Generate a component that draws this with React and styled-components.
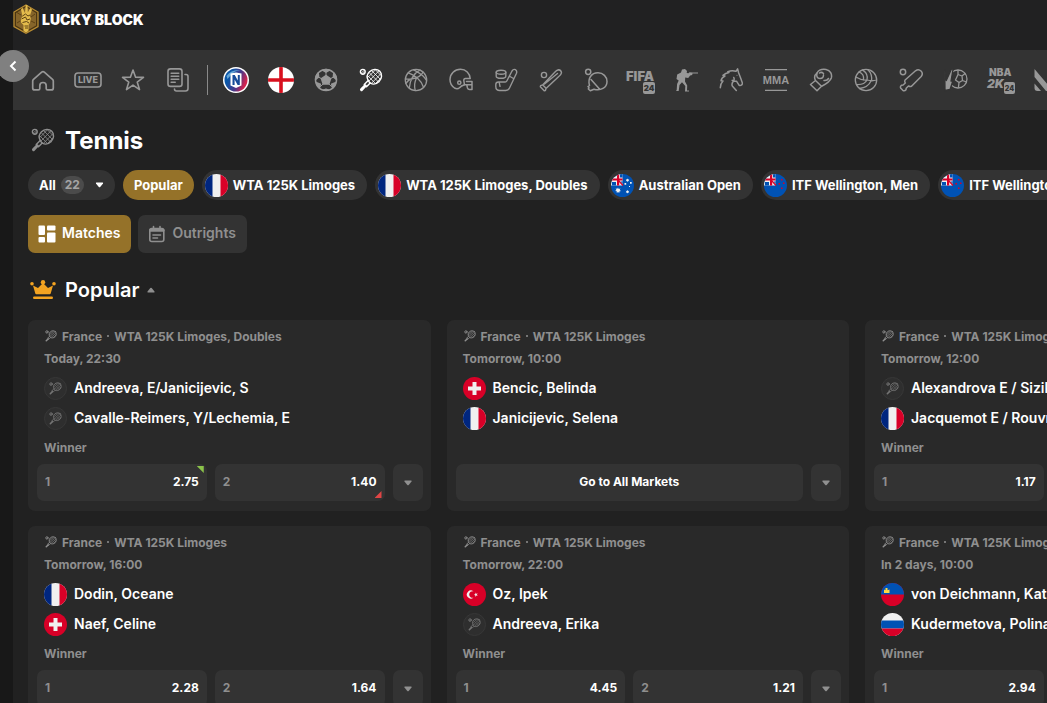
import React from 'react';
import styled, { createGlobalStyle } from 'styled-components';

const GlobalStyle = createGlobalStyle`
  * {
    box-sizing: border-box;
  }
  html {
    scrollbar-width: none;
  }
  body {
    margin: 0;
    background: #212121;
    color: #fff;
    font-family: Inter, "Open Sans", sans-serif;
    overflow-x: hidden;
  }
  button {
    font-family: inherit;
    border: none;
    margin: 0;
    cursor: pointer;
  }
`;

const Layout = styled.div`
  position: relative;
  display: flex;
  min-height: 100vh;
`;

const Rail = styled.aside`
  flex: 0 0 13px;
  background: #181818;
`;

const Page = styled.div`
  flex: 1;
  min-width: 0;
  overflow: hidden;
`;

const Header = styled.header`
  display: flex;
  align-items: flex-start;
  height: 50px;
  padding-top: 4px;
  background: #212122;
`;

const Brand = styled.a`
  display: flex;
  align-items: center;
  gap: 3px;
  color: #fff;
  text-decoration: none;
  font-size: 14px;
  font-weight: 900;
`;

const BackButton = styled.button`
  position: absolute;
  top: 50px;
  left: -3px;
  display: flex;
  align-items: center;
  justify-content: center;
  width: 32px;
  height: 32px;
  padding: 0;
  border-radius: 50%;
  background: #808080;
`;

const SportsNav = styled.nav`
  display: flex;
  align-items: center;
  height: 60px;
  padding-left: 7px;
  background: #333;
  overflow: hidden;
`;

const SportLink = styled.a`
  display: flex;
  flex: 0 0 45px;
  align-items: center;
  justify-content: center;
  color: ${(props) => (props.$active ? '#fff' : '#989898')};
`;

const Divider = styled.span`
  flex: 0 0 1px;
  height: 30px;
  margin: 0 5px 0 7px;
  background: #8a8a8a;
`;

const Content = styled.main`
  padding-left: 15px;
`;

const Heading = styled.div`
  display: flex;
  align-items: center;
  gap: 8px;
  height: 60px;
  color: #8f8f8f;
`;

const HeadingIcon = styled.span`
  display: flex;
  justify-content: center;
  width: 29px;
`;

const Title = styled.h1`
  margin: 0;
  font-size: 24px;
  font-weight: 700;
  color: #fff;
`;

const SubTitle = styled.h2`
  margin: 0;
  font-size: 20px;
  font-weight: 600;
  color: #fff;
`;

const Chips = styled.div`
  display: flex;
  gap: 8px;
  overflow: hidden;
`;

const Chip = styled.button`
  display: flex;
  flex: none;
  align-items: center;
  gap: 5px;
  height: 30px;
  padding: ${(props) => (props.$flag ? '0 12px 0 3px' : '0 11px')};
  border-radius: 15px;
  background: ${(props) => (props.$active ? '#957229' : '#333')};
  color: #fff;
  font-size: 13px;
  font-weight: 700;
  white-space: nowrap;
`;

const Count = styled.span`
  margin-right: 6px;
  padding: 0 4px;
  border-radius: 9px;
  background: #4b4b4b;
  color: #a5a5a5;
  font-size: 12px;
  line-height: 18px;
`;

const Tabs = styled.div`
  display: flex;
  gap: 7px;
  margin: 15px 0 7px;
`;

const Tab = styled.button`
  display: flex;
  align-items: center;
  gap: 6px;
  height: 38px;
  padding: 0 11px 0 10px;
  border-radius: 7px;
  background: ${(props) => (props.$active ? '#957229' : '#333')};
  color: ${(props) => (props.$active ? '#fff' : '#8f8f8f')};
  font-size: 14px;
  font-weight: 600;
`;

const TabLabel = styled.span`
  padding-bottom: 4px;
`;

const Cards = styled.div`
  display: grid;
  grid-template-columns: repeat(3, 39.5%);
  gap: 15px 16px;
  padding-bottom: 15px;
`;

const Card = styled.article`
  display: flex;
  flex-direction: column;
  padding: 5px 8px 10px 9px;
  border-radius: 7px;
  background: #292929;
`;

const Meta = styled.div`
  display: flex;
  align-items: center;
  gap: 5px;
  height: 22px;
  padding-left: 7px;
  color: #8f8f8f;
  font-size: 12px;
  font-weight: 700;
  white-space: nowrap;
`;

const MetaIcon = styled.span`
  display: flex;
  padding-left: 1px;
`;

const Dot = styled.span`
  width: 2px;
  height: 2px;
  border-radius: 50%;
  background: #8f8f8f;
`;

const Teams = styled.div`
  margin-top: 4px;
  padding-left: 7px;
`;

const Team = styled.div`
  display: flex;
  align-items: center;
  gap: 7px;
  height: 30px;
  font-size: 14px;
  font-weight: 600;
  white-space: nowrap;
`;

const TeamName = styled.span`
  padding-bottom: 2px;
`;

const NoFlag = styled.span`
  display: flex;
  align-items: center;
  justify-content: center;
  width: 23px;
  height: 23px;
  border: 1px solid #373737;
  border-radius: 50%;
  background: #2e2e2e;
  color: #747474;
`;

const Market = styled.div`
  height: 31px;
  padding-left: 7px;
  color: #8f8f8f;
  font-size: 12px;
  font-weight: 700;
  line-height: 30px;
`;

const Odds = styled.div`
  display: flex;
  gap: 8px;
`;

const Odd = styled.button`
  position: relative;
  display: flex;
  flex: 1;
  align-items: center;
  justify-content: ${(props) => (props.$center ? 'center' : 'space-between')};
  height: 37px;
  padding: 0 8px 2px;
  border-radius: 7px;
  background: #333;
  color: #fff;
  font-size: 12px;
  font-weight: 700;
`;

const OddLabel = styled.span`
  color: #8f8f8f;
`;

const Trend = styled.span`
  position: absolute;
  right: 3px;
  ${(props) => (props.$up ? 'top: 2px;' : 'bottom: 3px;')}
  width: 7px;
  height: 7px;
  background: ${(props) => (props.$up ? '#8bc34a' : '#e04545')};
  clip-path: ${(props) =>
    props.$up ? 'polygon(0 0, 100% 0, 100% 100%)' : 'polygon(100% 0, 100% 100%, 0 100%)'};
`;

const MoreButton = styled.button`
  display: flex;
  flex: 0 0 30px;
  align-items: center;
  justify-content: center;
  height: 37px;
  padding: 0;
  border-radius: 7px;
  background: #333;
  color: #909090;
`;

const FlagSvg = styled.svg`
  flex: none;
  border-radius: 50%;
`;

const Caret = ({ up, size = 8 }) => (
  <svg width={size} height="6" viewBox="0 0 8 6" fill="currentColor">
    <path d={up ? 'M1 5.5h6q1 0 .5-1L4.7 1q-.7-.7-1.4 0L.5 4.5q-.5 1 .5 1z' : 'M1 .5h6q1 0 .5 1L4.7 5q-.7.7-1.4 0L.5 1.5q-.5-1 .5-1z'} />
  </svg>
);

const Stroke = ({ size = 24, width = 1.5, children }) => (
  <svg
    width={size}
    height={size}
    viewBox="0 0 24 24"
    fill="none"
    stroke="currentColor"
    strokeWidth={width}
    strokeLinecap="round"
    strokeLinejoin="round"
  >
    {children}
  </svg>
);

const Tennis = ({ size, width = 1.4 }) => (
  <Stroke size={size} width={width}>
    <circle cx="3.8" cy="3.8" r="2.4" />
    <path d="M2.4 4.8 5 2.6M3.4 5.6 5.6 4" strokeWidth=".7" />
    <path d="M20.8 3.2c2.6 2.7 2.3 7.3-.7 10.3-2.6 2.6-6.3 3.1-8.9 1.5L7.5 18.8l-2.3-2.2 4-4.2C7.6 9.6 8 6.2 10.5 3.8c3-3 7.6-3.2 10.3-.6z" />
    <path d="M9.2 12.3q.6 1.7 2.1 2.8" />
    <path d="m13 3 8.6 8.6M10.6 5 19.5 14M9.3 8.3l6.6 6.7M16.8 2.2l5.2 5.3M19.8 3 10.2 12.8M21.8 5.8 13 14.8M16 2.3 9 9.3M22.3 9.7 17 15" strokeWidth=".8" />
    <path d="m6.200 17.800-3.700 3.800" strokeWidth="3" />
  </Stroke>
);

const Home = () => (
  <Stroke width={1.7}>
    <path d="M2.500 11.300 10.700 4.200q1.300-1.100 2.600 0l8.200 7.100q.8.700.8 1.800v6.800q0 2-2 2h-3.600q-1.500 0-1.500-1.500v-2.700a3.200 3.200 0 0 0-6.400 0v2.700q0 1.500-1.500 1.500H3.700q-2 0-2-2v-6.800q0-1.100.8-1.800z" />
  </Stroke>
);

const Live = () => (
  <svg width="28" height="24" viewBox="0 0 28 24" fill="none" stroke="currentColor">
    <rect x="1" y="5" width="26" height="14" rx="3" strokeWidth="1.600" />
    <text x="14" y="15" textAnchor="middle" fontSize="9" fontWeight="800" fill="currentColor" stroke="none">LIVE</text>
  </svg>
);

const Star = () => (
  <Stroke width={1.6}>
    <path d="m12 2 2.600 7.200 7.900.2-6.300 4.700 2.300 7.500-6.500-4.500-6.500 4.500 2.300-7.500L1.500 9.400l7.900-.2z" />
  </Stroke>
);

const Slip = () => (
  <Stroke width={1.6}>
    <rect x="2" y=".9" width="14" height="17.500" rx="2.500" />
    <path d="M5.200 5.200h7.500M5.200 8.200h7.500M5.200 11.200h7.500M5.200 14.200h4M19 6.500h1q2 0 2 2v12q0 2.500-2.500 2.500h-9q-2 0-2-2" />
  </Stroke>
);

const NLogo = () => (
  <svg width="26" height="26" viewBox="0 0 26 26">
    <defs>
      <linearGradient id="nlogo" x1="0" y1="0" x2="1" y2=".4">
        <stop offset=".3" stopColor="#0b57a8" />
        <stop offset=".7" stopColor="#4c3787" />
        <stop offset="1" stopColor="#d3224e" />
      </linearGradient>
    </defs>
    <circle cx="13" cy="13" r="13" fill="#fff" />
    <circle cx="13" cy="13" r="11.500" fill="url(#nlogo)" />
    <path d="M3.500 9Q8 2.500 17 3q-6 1-9 5l-3.500 4z" fill="#65a6d6" />
    <path d="M7.500 6.500 13 5.500l5.500 1v12L13 21l-5.500-2.500z" fill="#fff" />
    <path d="M9.500 18V8h2.300l3 5.500V8h2v10h-2.200l-3-5.500V18z" fill="#174b99" />
  </svg>
);

const England = () => (
  <FlagSvg width="26" height="26" viewBox="0 0 26 26">
    <path fill="#fff" d="M0 0h26v26H0z" />
    <path fill="#d8101e" d="M11.200 0h3.600v11.200H26v3.600H14.800V26h-3.600V14.800H0v-3.600h11.200z" />
  </FlagSvg>
);

const Soccer = () => (
  <Stroke width={1.5}>
    <circle cx="12" cy="12" r="10.500" />
    <path d="m12 7.500 4.500 3.200-1.700 5.200H9.200l-1.700-5.200z" fill="currentColor" />
    <path d="M8.500 2.200 12 4.200l3.500-2L12 1.500zM1.600 11.500l3-2.600-.4-4L2 8.500zM22.400 11.500l-3-2.600.4-4L22 8.500zM5.300 20l1-3.800-3.800-1.400 1 3zM18.700 20l-1-3.800 3.800-1.400-1 3zM9.500 22.300l2.500-1 2.500 1z" fill="currentColor" />
    <path d="M12 4.500v3M4.500 9l3 1.700M19.500 9l-3 1.700M6.500 18.500l2.700-2.600M17.500 18.500l-2.700-2.600" strokeWidth="1" />
  </Stroke>
);

const Basketball = () => (
  <Stroke width={1.3}>
    <circle cx="12" cy="12" r="10.700" />
    <path d="M4.200 4.800C10 6.500 17 11.500 19.600 19.500M1.500 11C9 12 17 9 19 4M9.500 1.700C14 4 20 7 22.500 12.500M16 2Q6.500 7 5.300 20M12.500 10q-3 6-1.300 12.500M2 15.500q3-5.500 10.500-5.500" />
  </Stroke>
);

const Helmet = () => (
  <Stroke width={1.5}>
    <path d="M5.500 20C2.500 18 1 15 1 11.600 1 5.600 5.700 1.300 11.500 1.300c5.500 0 9.300 4 9.700 9.200h-4.700q-1.800.2-1.700 2l.7 4.200q-3.300 1-5 3-2 1.800-5 .3z" />
    <circle cx="10.300" cy="14.700" r="1.600" />
    <path d="M15.500 16.700h7.200M17.500 13.500h5.500v8h-2.500q-1.500 0-2-1.500l-.8-3.300" />
  </Stroke>
);

const Hockey = () => (
  <Stroke width={1.4}>
    <ellipse cx="7" cy="4.200" rx="4.800" ry="2" />
    <path d="M2.200 4.200v4c0 2.800 9.600 2.800 9.600 0v-4M18 3l-5.200 10q-.5 1-1.600 1H4.500q-2.700 0-2.700 2.500v2q0 4 4 4h6q2.500 0 3.700-2.500L22.500 5.200q.8-2.500-1.100-3.500T18 3zM5.200 14.300l.8 4M16 8.500l3.500 2" />
  </Stroke>
);

const Baseball = () => (
  <Stroke width={1.4}>
    <circle cx="5" cy="7" r="2.600" />
    <path d="M19.500 1.800q2.700.2 3 3-.5 2.200-3 4L7 20.500l-.6 2-1.200.2-3.900-3.900.3-1.200 2-.7L15.500 4.500q2-2.200 4-2.700zM4 17.300l2.800 2.800M5.500 16 18.500 5.500" />
  </Stroke>
);

const TableTennis = () => (
  <Stroke width={1.5}>
    <circle cx="4.200" cy="3.800" r="2.600" />
    <path d="M5.500 17.500c-2-7 1.800-12.700 8.500-12.700 5.200 0 9 4 9 8.700 0 6.300-6.500 9.700-13 7.700l-3.700 1.600-2-1.800.7-1.200-1-1.200zM7 11.500l8.500 9.500" />
  </Stroke>
);

const Fifa = () => (
  <svg width="32" height="28" viewBox="0 0 32 28" fill="currentColor" fontFamily="Inter" fontWeight="900">
    <text x="1" y="15" fontSize="13">FIFA</text>
    <rect x="18" y="16" width="12" height="12" rx="2" />
    <text x="24" y="25" fontSize="8" fill="#333" textAnchor="middle">24</text>
  </svg>
);

const Shooter = () => (
  <svg width="26" height="24" viewBox="0 0 26 24" fill="currentColor">
    <path d="M9 1.500 12 1l2 2-.3 2 1.800.3 1-1 3 .3h5.500v1h-5.500l-.3 1.500-2 .3-2 2.500-3-.5-.2 4 2.200 4-.2 5h2v1h-4l.3-5.500-3.300-3.600L6.500 17l-.8 6H3l.7-1 .4-6 1.600-3.500L3.500 11l.7-4.500L8 4.500z" />
  </svg>
);

const Horse = () => (
  <Stroke width={1.5}>
    <path d="M1.300 19.700Q1.500 15.500 4 13l-2-.2Q2.500 9.500 6 8l-2-.6Q6.500 5 10 4.500L8.800 3.600Q13 2 17 3.300L18.600.9l1 3.800 2.200 5.800 1.700 4.700q-.6 2.800-3.500 2l-2.500-4q-2.500.3-4.300-.8M14.800 9.500q1 2-.8 4.300-1.600 2.200-.7 4.200l4 4.500" />
    <circle cx="18" cy="7.200" r=".5" fill="currentColor" stroke="none" />
  </Stroke>
);

const Mma = () => (
  <svg width="28" height="24" viewBox="0 0 28 24" fill="currentColor">
    <path d="M3 1h22v1.300H3zM3 21.700h22V23H3z" />
    <text x="14" y="16" fontSize="11" fontWeight="700" textAnchor="middle" fontFamily="'Liberation Sans Narrow', 'Liberation Sans', sans-serif">MMA</text>
  </svg>
);

const Boxing = () => (
  <Stroke width={1.5}>
    <path d="m6.500 12.500-5 4L8 22.700l4.500-4.400zM6.500 12.500C5 9.500 6 6.500 8 5c2-3.500 5.500-4 9-3.500 4.500.8 6.300 5 5.300 8.500-1.300 4-5.300 6-9.800 8.300" />
    <path d="M8 5c-.8 3 0 5.500 3 5.500q3.500 0 3.500-3.500M10.500 5q2-1.500 4 .5M15 12.500q3 .5 4.500-2" />
  </Stroke>
);

const Volleyball = () => (
  <Stroke width={1.3}>
    <circle cx="12" cy="12" r="10.700" />
    <path d="M8.500 1.900Q14.500 6 13 12 7.500 12.500 1.800 9M13 12q5 1.500 9.500 0M5 4Q10.500 6 9.500 12M14 1.700q4.500 4.500 3.500 11M13 12Q10.500 17 2.500 16.500M17 13q-3 6.500-11.500 7.500" />
  </Stroke>
);

const Cricket = () => (
  <Stroke width={1.5}>
    <circle cx="4" cy="4" r="2.700" />
    <path d="M16.500 2.800q3-2.300 5.500.2t.2 5.500l-9.700 9.700q-1.500.7-3-.2l-2.300 2.200-.2 1.500q-1.500 1.800-3.200.6l-2-2q-1-1.700.6-3.100l1.700-.2L6.300 15q-1-1.500-.2-3z" />
  </Stroke>
);

const Futsal = () => (
  <Stroke width={1.3}>
    <circle cx="14" cy="11" r="9" />
    <path d="m14 6.500 4 1.500.5 4.500-3.500 2-3.500-2.500zM14 6.500V2.500M18 8l3-2.500M18.500 12.500l4 1.500M15 14.500l-.5 4.500" />
    <path d="M.8 2.500 2.300 12.500 7.500 1l1.500.5-2 11.500 2-.5-3 9L1 22.500z" fill="currentColor" stroke="#333" />
  </Stroke>
);

const Nba = () => (
  <svg width="30" height="28" viewBox="0 0 30 28" fill="currentColor" fontFamily="Inter" fontWeight="900">
    <text x="3" y="10" fontSize="10">NBA</text>
    <text x="1" y="22" fontSize="12" fontStyle="italic">2K</text>
    <rect x="18" y="16" width="11" height="12" rx="2" />
    <text x="23.500" y="25" fontSize="7" fill="#333" textAnchor="middle">24</text>
  </svg>
);

const Valorant = () => (
  <svg width="24" height="24" viewBox="0 0 24 24" fill="currentColor">
    <path d="M.5 1 19 23h-7L.5 9zM.5 15.500 7 23H3.500q-3 0-3-3zM23.500 4v10l-4 4-3.500-4z" />
  </svg>
);

const Crown = () => (
  <svg width="26" height="20" viewBox="0 0 26 20" fill="#f3a321">
    <path d="M3 5.500 8 8l5-5 5 5 5-2.500-2.300 8q-.2.800-1 .8H6.300q-.8 0-1-.8z" />
    <circle cx="2" cy="3.700" r="1.800" />
    <circle cx="13" cy="2.300" r="2.200" />
    <circle cx="24" cy="3.700" r="1.800" />
    <rect x="3" y="16.500" width="20" height="2.500" rx="1.200" />
  </svg>
);

const GridIcon = () => (
  <svg width="18" height="18" viewBox="0 0 18 18" fill="#fff">
    <rect x=".5" y=".5" width="6.500" height="9.500" rx="1" />
    <rect x="9" y=".5" width="8.500" height="5" rx="1" />
    <rect x=".5" y="12" width="6.500" height="5.500" rx="1" />
    <rect x="9" y="7.500" width="8.500" height="10" rx="1" />
  </svg>
);

const CalendarIcon = () => (
  <svg width="18" height="18" viewBox="0 0 18 18" fill="none" stroke="currentColor" strokeWidth="1.600" strokeLinecap="round">
    <rect x="1.800" y="3.500" width="14" height="13" rx="2" />
    <path d="M2.500 5.200h12.500" strokeWidth="3" />
    <path d="M5.500 1.500v2M12 1.500v2M5 10h7.500M5 13h4.500" />
  </svg>
);

const LogoMark = () => (
  <svg width="26" height="30" viewBox="0 0 26 30">
    <path d="M13 1 25 8v14.500L13 29.300 1 22.500V8z" fill="#4a3512" stroke="#b78b32" strokeWidth="1.300" />
    <path d="M13 3 23 9v12.500l-10 5.700-10-5.700V9z" fill="#86652a" />
    <path d="M10.500 27v-6L8 18.500v-4l1.500-2L8 5.500l1.500-1.700L12 9l.7-8 1.800.3.3 7.200 2.500-4.500 1.700 1.500-2.200 6.500 1 2.500-1 4.500-1.300 2V27l-2.500 1.500z" fill="#e3bb4c" />
    <path d="m9.500 12 3-2 2.500 2 2-1M8.500 15l4-2 1.500 3 3-1M9.500 18.500l4-1 2.500 1.500M11.500 22h3.500M3 8l5 3M4 19l3-2M22 10l-4 3M22 19l-4-2M12 24h3" stroke="#5d4213" fill="none" />
  </svg>
);

const flags = {
  fr: (
    <>
      <path fill="#f0f0f0" d="M0 0h23v23H0z" />
      <path fill="#00267f" d="M0 0h7.500v23H0z" />
      <path fill="#d80027" d="M15.500 0H23v23h-7.500z" />
    </>
  ),
  ch: (
    <>
      <path fill="#d80027" d="M0 0h23v23H0z" />
      <path fill="#f0f0f0" d="M9.500 5h4v4.500H18v4h-4.500V18h-4v-4.500H5v-4h4.500z" />
    </>
  ),
  tr: (
    <>
      <path fill="#d80027" d="M0 0h23v23H0z" />
      <path fill="#f0f0f0" d="M10.500 8.500a4 4 0 1 0 0 6 3.200 3.200 0 1 1 0-6zM12.500 9.500l.8 1.300 1.500-.3-1 1.200 1 1.200-1.500-.3-.8 1.300-.1-1.500-1.400-.7 1.400-.6z" />
    </>
  ),
  li: (
    <>
      <path fill="#d80027" d="M0 0h23v23H0z" />
      <path fill="#0052b4" d="M0 0h23v11.500H0z" />
      <path fill="#ffda44" d="M3 10V6.500l1.500.8V5h2V7.300L8.500 6.500V10z" />
    </>
  ),
  ru: (
    <>
      <path fill="#f0f0f0" d="M0 0h23v23H0z" />
      <path fill="#0052b4" d="M0 7.500h23v8H0z" />
      <path fill="#d80027" d="M0 15.500h23V23H0z" />
    </>
  ),
  nz: (
    <>
      <path fill="#0052b4" d="M0 0h23v23H0z" />
      <path fill="#f0f0f0" d="M0 0h11.500v11.500H0z" />
      <path fill="#d80027" d="M6 0h2.200v4.500h3.300v2H8.200v5H6v-5H0v-2h6z" />
      <path fill="#0052b4" d="M9 0h2.500v3.500H9zM1 8h4v3.500H1zM9.500 7.500h2V10z" />
      <path stroke="#d80027" strokeWidth="1.200" d="m7.500 6.500 4.500 5" />
      <path fill="#d80027" d="M17 5h1.500v1.500H17zM14.500 9H16v1.500h-1.500zM19 8.500h1.500V10H19zM17 13.500h1.500V15H17z" />
    </>
  ),
  au: (
    <>
      <path fill="#0052b4" d="M0 0h23v23H0z" />
      <path fill="#f0f0f0" d="M0 0h11.500v11.500H0z" />
      <path fill="#d80027" d="M6 0h2.200v4.500h3.300v2H8.200v5H6v-5H0v-2h6z" />
      <path fill="#0052b4" d="M9 0h2.500v3.500H9zM1 8h4v3.500H1zM9.500 7.500h2V10z" />
      <path stroke="#d80027" strokeWidth="1.200" d="m7.500 6.500 4.500 5" />
      <path fill="#f0f0f0" d="m7 13.500.7 1.500 1.700-.4-.7 1.500 1.300 1-1.700.4V19L7 18l-1.200 1v-1.700l-1.700-.4 1.300-1-.7-1.500 1.600.4zM16.500 4.500l.6 1 1.100-.2-.6 1 .6 1-1.100-.2-.6 1-.6-1-1.100.2.6-1-.6-1 1.100.2zM13.500 9h1.700v1.700h-1.700zM19 8h1.700v1.700H19zM16.500 16l.6 1 1.100-.2-.6 1 .6 1-1.100-.2-.6 1-.6-1-1.100.2.6-1-.6-1 1.100.2zM18 12h1v1h-1z" />
    </>
  ),
};

const Flag = ({ code }) => (
  <FlagSvg width="23" height="23" viewBox="0 0 23 23">
    {flags[code]}
  </FlagSvg>
);

const shortcuts = [
  { name: 'Home', Icon: Home },
  { name: 'Live', Icon: Live },
  { name: 'Favourites', Icon: Star },
  { name: 'My bets', Icon: Slip },
];

const sports = [
  { name: 'Nations League', Icon: NLogo },
  { name: 'England', Icon: England },
  { name: 'Soccer', Icon: Soccer },
  { name: 'Tennis', Icon: Tennis, active: true },
  { name: 'Basketball', Icon: Basketball },
  { name: 'American football', Icon: Helmet },
  { name: 'Ice hockey', Icon: Hockey },
  { name: 'Baseball', Icon: Baseball },
  { name: 'Table tennis', Icon: TableTennis },
  { name: 'FIFA', Icon: Fifa },
  { name: 'Counter-Strike', Icon: Shooter },
  { name: 'Horse racing', Icon: Horse },
  { name: 'MMA', Icon: Mma },
  { name: 'Boxing', Icon: Boxing },
  { name: 'Volleyball', Icon: Volleyball },
  { name: 'Cricket', Icon: Cricket },
  { name: 'Futsal', Icon: Futsal },
  { name: 'NBA 2K', Icon: Nba },
  { name: 'Valorant', Icon: Valorant },
];

const leagues = [
  { flag: 'fr', name: 'WTA 125K Limoges' },
  { flag: 'fr', name: 'WTA 125K Limoges, Doubles' },
  { flag: 'au', name: 'Australian Open' },
  { flag: 'nz', name: 'ITF Wellington, Men' },
  { flag: 'nz', name: 'ITF Wellington, Women' },
];

const matches = [
  {
    league: 'WTA 125K Limoges, Doubles',
    time: 'Today, 22:30',
    teams: [{ name: 'Andreeva, E/Janicijevic, S' }, { name: 'Cavalle-Reimers, Y/Lechemia, E' }],
    odds: [{ value: '2.75', trend: 'up' }, { value: '1.40', trend: 'down' }],
  },
  {
    league: 'WTA 125K Limoges',
    time: 'Tomorrow, 10:00',
    teams: [{ flag: 'ch', name: 'Bencic, Belinda' }, { flag: 'fr', name: 'Janicijevic, Selena' }],
  },
  {
    league: 'WTA 125K Limoges, Doubles',
    time: 'Tomorrow, 12:00',
    teams: [{ name: 'Alexandrova E / Sizikova Y' }, { flag: 'fr', name: 'Jacquemot E / Rouvroy M' }],
    odds: [{ value: '1.17' }, { value: '4.60' }],
  },
  {
    league: 'WTA 125K Limoges',
    time: 'Tomorrow, 16:00',
    teams: [{ flag: 'fr', name: 'Dodin, Oceane' }, { flag: 'ch', name: 'Naef, Celine' }],
    odds: [{ value: '2.28' }, { value: '1.64' }],
  },
  {
    league: 'WTA 125K Limoges',
    time: 'Tomorrow, 22:00',
    teams: [{ flag: 'tr', name: 'Oz, Ipek' }, { name: 'Andreeva, Erika' }],
    odds: [{ value: '4.45' }, { value: '1.21' }],
  },
  {
    league: 'WTA 125K Limoges',
    time: 'In 2 days, 10:00',
    teams: [{ flag: 'li', name: 'von Deichmann, Kathinka' }, { flag: 'ru', name: 'Kudermetova, Polina' }],
    odds: [{ value: '2.94' }, { value: '1.42' }],
  },
];

const MatchCard = ({ match }) => (
  <Card>
    <Meta>
      <MetaIcon><Tennis size={12} width={1.6} /></MetaIcon>
      <span>France</span>
      <Dot />
      <span>{match.league}</span>
    </Meta>
    <Meta>{match.time}</Meta>
    <Teams>
      {match.teams.map((team) => (
        <Team key={team.name}>
          {team.flag ? <Flag code={team.flag} /> : <NoFlag><Tennis size={13} width={1.6} /></NoFlag>}
          <TeamName>{team.name}</TeamName>
        </Team>
      ))}
    </Teams>
    <Market>{match.odds ? 'Winner' : null}</Market>
    <Odds>
      {match.odds ? (
        match.odds.map((odd, i) => (
          <Odd key={odd.value}>
            <OddLabel>{i + 1}</OddLabel>
            {odd.value}
            {odd.trend && <Trend $up={odd.trend === 'up'} />}
          </Odd>
        ))
      ) : (
        <Odd $center>Go to All Markets</Odd>
      )}
      <MoreButton aria-label="More markets">
        <Caret />
      </MoreButton>
    </Odds>
  </Card>
);

export default function App() {
  return (
    <>
      <GlobalStyle />
      <Layout>
        <Rail />
        <Page>
          <Header>
            <Brand href="#">
              <LogoMark />
              LUCKY BLOCK
            </Brand>
          </Header>
          <SportsNav>
            {shortcuts.map(({ name, Icon }) => (
              <SportLink key={name} href="#" aria-label={name}>
                <Icon />
              </SportLink>
            ))}
            <Divider />
            {sports.map(({ name, Icon, active }) => (
              <SportLink key={name} href="#" aria-label={name} $active={active}>
                <Icon />
              </SportLink>
            ))}
          </SportsNav>

          <Content>
            <Heading>
              <HeadingIcon><Tennis /></HeadingIcon>
              <Title>Tennis</Title>
            </Heading>

            <Chips>
              <Chip>
                All
                <Count>22</Count>
                <Caret size={9} />
              </Chip>
              <Chip $active>Popular</Chip>
              {leagues.map((league) => (
                <Chip key={league.name} $flag>
                  <Flag code={league.flag} />
                  {league.name}
                </Chip>
              ))}
            </Chips>

            <Tabs>
              <Tab $active><GridIcon /><TabLabel>Matches</TabLabel></Tab>
              <Tab><CalendarIcon /><TabLabel>Outrights</TabLabel></Tab>
            </Tabs>

            <Heading>
              <HeadingIcon><Crown /></HeadingIcon>
              <SubTitle>Popular</SubTitle>
              <Caret up />
            </Heading>

            <Cards>
              {matches.map((match, i) => (
                <MatchCard key={i} match={match} />
              ))}
            </Cards>
          </Content>
        </Page>
        <BackButton aria-label="Back">
          <svg width="8" height="12" viewBox="0 0 8 12" fill="none" stroke="#fff" strokeWidth="2">
            <path d="M6.500 1.500 2 6l4.500 4.500" />
          </svg>
        </BackButton>
      </Layout>
    </>
  );
}
